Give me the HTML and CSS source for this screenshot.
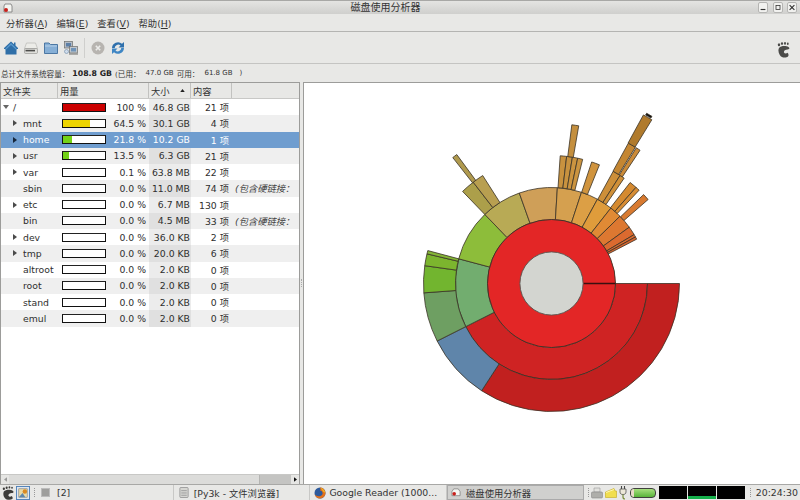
FILE: index.html
```html
<!DOCTYPE html>
<html lang="zh">
<head>
<meta charset="utf-8">
<title>磁盘使用分析器</title>
<link rel="stylesheet" href="styles.css">
</head>
<body>
<div class="screen">
  <header class="titlebar">
    <svg class="title-icon" viewBox="0 0 10 10"><path d="M1 3 L2 1 H8 L9 3 V9 H1Z" fill="#f4f4f0" stroke="#777" stroke-width=".8"/><circle cx="3" cy="7" r="2" fill="#c8201c"/></svg>
    <span class="title-text">磁盘使用分析器</span>
    <div class="wm-buttons">
      <span class="wm-btn"><svg viewBox="0 0 10 10"><path d="M2 7.5H8" stroke="#333" stroke-width="1.4"/></svg></span>
      <span class="wm-btn"><svg viewBox="0 0 10 10"><rect x="2.5" y="2.5" width="5" height="5" fill="none" stroke="#333"/></svg></span>
      <span class="wm-btn"><svg viewBox="0 0 10 10"><path d="M2 2L8 8M8 2L2 8" stroke="#333" stroke-width="1.4"/></svg></span>
    </div>
  </header>
  <nav class="menubar">
    <span class="menu-item">分析器(<u>A</u>)</span>
    <span class="menu-item">编辑(<u>E</u>)</span>
    <span class="menu-item">查看(<u>V</u>)</span>
    <span class="menu-item">帮助(<u>H</u>)</span>
  </nav>
  <div class="toolbar">
    <span class="tool"><svg viewBox="0 0 14 14"><path d="M7 0.5 L10 3.2V1.5H11.5V4.6L14 7V8H12.5V13.5H1.5V8H0V7Z" fill="#2f6fa8"/><path d="M7 2 L12.5 7.5V9L7 4 1.5 9V7.5Z" fill="#5a9bd0"/></svg></span>
    <span class="tool"><svg viewBox="0 0 14 14"><path d="M2.5 2H11.5L13.5 7.5H0.5Z" fill="#ecece8" stroke="#b0b0ac" stroke-width=".6"/><rect x="0.5" y="7.5" width="13" height="5" rx="1.2" fill="#dededa" stroke="#8c8c88" stroke-width=".6"/><rect x="1.5" y="8.8" width="9.5" height="1.6" fill="#4c4c4a"/></svg></span>
    <span class="tool"><svg viewBox="0 0 14 14"><path d="M0.5 12.5V2H5L6.5 3.5H13.5V12.5Z" fill="#86afd6" stroke="#3f6d9c" stroke-width=".9"/><path d="M1 5H13" stroke="#b6d0e8"/></svg></span>
    <span class="tool"><svg viewBox="0 0 14 14"><rect x="0.5" y="0.5" width="8" height="6.5" fill="#b4bcc6" stroke="#6e6e6c" stroke-width=".7"/><rect x="2" y="2" width="5" height="3.500" fill="#5d7fa6"/><rect x="5.5" y="5.500" width="8" height="6.5" fill="#c0c6cc" stroke="#6e6e6c" stroke-width=".7"/><rect x="7" y="7" width="5" height="3.500" fill="#6f93b8"/><path d="M5 13H14" stroke="#8a8a88" stroke-width="1.300"/><circle cx="2.500" cy="10.500" r="2" fill="#cfdceb" stroke="#6b88a8" stroke-width=".6"/></svg></span>
    <span class="tool-sep"></span>
    <span class="tool"><svg viewBox="0 0 14 14"><circle cx="7" cy="7" r="6.5" fill="#b7b4b0"/><path d="M4.8 4.8L9.2 9.2M9.2 4.8L4.8 9.2" stroke="#ececea" stroke-width="1.6"/></svg></span>
    <span class="tool"><svg viewBox="0 0 14 14"><path d="M1 7A6 6 0 0 1 11 2.8L13 1V6.5H7.5L9.5 4.5A3.5 3.5 0 0 0 3.7 7Z" fill="#2f70ac"/><path d="M13 7A6 6 0 0 1 3 11.200L1 13V7.5H6.5L4.5 9.5A3.5 3.5 0 0 0 10.300 7Z" fill="#3f86c4"/></svg></span>
    <svg class="foot-big" viewBox="0 0 14 16"><g fill="#4a4a48"><ellipse cx="2" cy="2.8" rx="1.2" ry="1.5"/><ellipse cx="5" cy="1.6" rx="1.1" ry="1.4"/><ellipse cx="8" cy="1.4" rx="1" ry="1.3"/><ellipse cx="10.8" cy="1.8" rx=".9" ry="1.2"/><path d="M2 6C4 3.500 9 3.500 11.500 5C13 6 12.500 7.500 10.500 7.500C8 7.500 6.500 9 7 10.500C7.500 11.800 9.500 11.800 10.500 10.800C11.500 12 12 13 11 14.500C9 16.300 4.500 16 2.800 13C1.300 10.500 1 8 2 6Z"/></g></svg>
  </div>
  <div class="infobar">
    <span class="info-label">总计文件系统容量：</span>
    <b class="info-total">108.8 GB</b>
    <span class="info-open">(<span class="info-cjk">已用：</span></span>
    <span class="info-num">47.0 GB</span>
    <span class="info-cjk info-free">可用：</span>
    <span class="info-num">61.8 GB</span>
    <span class="info-close">)</span>
  </div>
  <main class="panes">
    <section class="tree">
      <div class="tree-head">
        <span class="th">文件夹</span>
        <span class="th">用量</span>
        <span class="th th-sort">大小<svg class="sort-arrow" viewBox="0 0 6 4"><path d="M3 0L6 4H0Z" fill="#222"/></svg></span>
        <span class="th">内容</span>
        <span class="th th-last"></span>
      </div>
      <div class="tree-body">
        <div class="row"><span class="name root"><i class="exp exp-down"></i>/</span><span class="usage"><span class="bar"><span class="fill fill-red" style="width:100%"></span></span><span class="pct">100 %</span></span><span class="size">46.8 GB</span><span class="count">21 项</span><span class="note"></span></div>
        <div class="row alt"><span class="name"><i class="exp"></i>mnt</span><span class="usage"><span class="bar"><span class="fill fill-yellow" style="width:64.5%"></span></span><span class="pct">64.5 %</span></span><span class="size">30.1 GB</span><span class="count">4 项</span><span class="note"></span></div>
        <div class="row selected"><span class="name"><i class="exp"></i>home</span><span class="usage"><span class="bar"><span class="fill fill-green" style="width:21.8%"></span></span><span class="pct">21.8 %</span></span><span class="size">10.2 GB</span><span class="count">1 项</span><span class="note"></span></div>
        <div class="row alt"><span class="name"><i class="exp"></i>usr</span><span class="usage"><span class="bar"><span class="fill fill-green" style="width:13.5%"></span></span><span class="pct">13.5 %</span></span><span class="size">6.3 GB</span><span class="count">21 项</span><span class="note"></span></div>
        <div class="row"><span class="name"><i class="exp"></i>var</span><span class="usage"><span class="bar"></span><span class="pct">0.1 %</span></span><span class="size">63.8 MB</span><span class="count">22 项</span><span class="note"></span></div>
        <div class="row alt"><span class="name"><i class="exp exp-none"></i>sbin</span><span class="usage"><span class="bar"></span><span class="pct">0.0 %</span></span><span class="size">11.0 MB</span><span class="count">74 项</span><span class="note">(包含硬链接：</span></div>
        <div class="row"><span class="name"><i class="exp"></i>etc</span><span class="usage"><span class="bar"></span><span class="pct">0.0 %</span></span><span class="size">6.7 MB</span><span class="count">130 项</span><span class="note"></span></div>
        <div class="row alt"><span class="name"><i class="exp exp-none"></i>bin</span><span class="usage"><span class="bar"></span><span class="pct">0.0 %</span></span><span class="size">4.5 MB</span><span class="count">33 项</span><span class="note">(包含硬链接：</span></div>
        <div class="row"><span class="name"><i class="exp"></i>dev</span><span class="usage"><span class="bar"></span><span class="pct">0.0 %</span></span><span class="size">36.0 KB</span><span class="count">2 项</span><span class="note"></span></div>
        <div class="row alt"><span class="name"><i class="exp"></i>tmp</span><span class="usage"><span class="bar"></span><span class="pct">0.0 %</span></span><span class="size">20.0 KB</span><span class="count">6 项</span><span class="note"></span></div>
        <div class="row"><span class="name"><i class="exp exp-none"></i>altroot</span><span class="usage"><span class="bar"></span><span class="pct">0.0 %</span></span><span class="size">2.0 KB</span><span class="count">0 项</span><span class="note"></span></div>
        <div class="row alt"><span class="name"><i class="exp exp-none"></i>root</span><span class="usage"><span class="bar"></span><span class="pct">0.0 %</span></span><span class="size">2.0 KB</span><span class="count">0 项</span><span class="note"></span></div>
        <div class="row"><span class="name"><i class="exp exp-none"></i>stand</span><span class="usage"><span class="bar"></span><span class="pct">0.0 %</span></span><span class="size">2.0 KB</span><span class="count">0 项</span><span class="note"></span></div>
        <div class="row alt"><span class="name"><i class="exp exp-none"></i>emul</span><span class="usage"><span class="bar"></span><span class="pct">0.0 %</span></span><span class="size">2.0 KB</span><span class="count">0 项</span><span class="note"></span></div>
      </div>
      <div class="hscroll">
        <span class="sb-btn"><svg viewBox="0 0 4 6"><path d="M4 0V6L0 3Z" fill="#999"/></svg></span>
        <span class="sb-track"><span class="sb-thumb"></span></span>
        <span class="sb-btn"><svg viewBox="0 0 4 6"><path d="M0 0V6L4 3Z" fill="#111"/></svg></span>
      </div>
    </section>
    <div class="pane-handle"><span class="grip"></span></div>
    <section class="chart">
      <svg id="sunburst" class="sunburst" viewBox="-199.5 -199.5 400 400"></svg>
    </section>
  </main>
  <footer class="taskbar">
    <svg class="panel-foot" viewBox="0 0 14 15"><g fill="#3c3c3a"><ellipse cx="2" cy="3" rx="1.2" ry="1.4"/><ellipse cx="5" cy="1.8" rx="1.1" ry="1.3"/><ellipse cx="8" cy="1.5" rx="1" ry="1.2"/><ellipse cx="10.8" cy="1.9" rx=".9" ry="1.1"/><path d="M2 6C4 3.500 9 3.500 11.500 5C13 6 12.500 7.500 10.500 7.500C8 7.500 6.500 9 7 10.500C7.500 11.800 9.500 11.800 10.500 10.800C11.500 12 12 13 11 14C9 15.500 4.500 15 2.800 12.500C1.300 10.500 1 8 2 6Z"/></g></svg>
    <svg class="panel-pic" viewBox="0 0 15 15"><rect x=".5" y=".5" width="14" height="14" fill="#dfe6ee" stroke="#4d7fb8"/><rect x="3" y="3" width="9" height="9" fill="#e9d9a6" stroke="#777" stroke-width=".6"/><circle cx="9.5" cy="6" r="2.4" fill="#d98a22"/><path d="M3 12L7 7.500L10 12Z" fill="#5c86ad"/></svg>
    <span class="handle"></span>
    <div class="task task-workspace"><span class="task-square"></span><span class="task-label">[2]</span></div>
    <div class="task"><svg class="task-icon" viewBox="0 0 10 12"><rect x=".5" y=".5" width="9" height="11" rx="1" fill="#d6d6d2" stroke="#999"/><path d="M2 4H8M2 6.500H8M2 9H8" stroke="#999"/></svg><span class="task-label">[Py3k - 文件浏览器]</span></div>
    <div class="task"><svg class="task-icon task-fox" viewBox="0 0 12 12"><circle cx="6" cy="6" r="5.5" fill="#2d5a9c"/><path d="M6 .5A5.500 5.500 0 1 1 .6 7C2 9.500 6 10 8 8C9.500 6 8 3.500 6 3.500C7 2.500 6 1 6 .5Z" fill="#e2701a"/><path d="M6.500 .7C9 1.200 11 3.500 11.400 6L9 4.500Z" fill="#f0b020"/></svg><span class="task-label">Google Reader (1000...</span></div>
    <div class="task task-active"><svg class="task-icon" viewBox="0 0 11 10"><path d="M1 4L3 1H8L10 4V8.500H1Z" fill="#f4f4f0" stroke="#777" stroke-width=".8"/><circle cx="3.5" cy="6.5" r="2" fill="#c8201c"/></svg><span class="task-label">磁盘使用分析器</span></div>
    <span class="handle handle-tray"></span>
    <svg class="tray-icon" viewBox="0 0 12 12"><path d="M3 1H9V5H3Z" fill="#e2e2de" stroke="#999" stroke-width=".6"/><rect x=".5" y="5" width="11" height="6" rx="1" fill="#aeaeaa" stroke="#888" stroke-width=".6"/></svg>
    <svg class="tray-icon" viewBox="0 0 12 12"><path d="M.5 10.500V5L3 4 9 1.500 10 4H11.500V10.500Z" fill="#f1de4e" stroke="#c8b22e" stroke-width=".7"/><path d="M1 5.500L9 2.500" stroke="#fff7b0"/></svg>
    <svg class="tray-plug" viewBox="0 0 8 14"><path d="M2.500 0V3M5.500 0V3" stroke="#444" stroke-width="1.100"/><path d="M1 3H7V6C7 8 5.500 8.500 4 8.500C2.500 8.500 1 8 1 6Z" fill="#ece8d8" stroke="#555" stroke-width=".8"/><path d="M4 8.500V11C4 12.500 5 13 6 13" fill="none" stroke="#7a8f3a" stroke-width="1.200"/></svg>
    <span class="battery"><span class="battery-cap"></span></span>
    <div class="monitors">
      <span class="monitor"></span>
      <span class="monitor monitor-net"></span>
      <span class="monitor"></span>
    </div>
    <span class="handle handle-clock"></span>
    <span class="clock">20:24:30</span>
  </footer>
</div>
<script src="sunburst.js"></script>
</body>
</html>
```
FILE: styles.css
```css
* { box-sizing: border-box; }
html, body { margin: 0; padding: 0; background: #e8e8e6; }
body {
  width: 800px;
  height: 500px;
  overflow: hidden;
  font-family: "DejaVu Sans", "Noto Sans CJK SC", sans-serif;
  font-size: 9.3px;
  color: #2a2a2a;
}
.screen { width: 800px; height: 500px; display: flex; flex-direction: column; }

.titlebar {
  height: 14px;
  flex: none;
  display: flex;
  align-items: center;
  padding-left: 3px;
  border-top: 1px solid #a8a8a6;
  background: linear-gradient(#e4e4e2, #cfcfcd);
}
.title-icon { width: 10px; height: 10px; }
.title-text {
  flex: 1;
  text-align: center;
  font-size: 10px;
  color: #333;
  line-height: 12px;
}
.wm-buttons { display: flex; gap: 4.5px; padding-right: 3px; }
.wm-btn {
  width: 10px;
  height: 11px;
  display: flex;
  background: #f1f1ef;
  border: 1px solid #b5b5b3;
  border-radius: 2px;
}
.wm-btn svg { width: 8px; height: 9px; }

.menubar {
  height: 18px;
  flex: none;
  display: flex;
  align-items: center;
  gap: 9px;
  padding-left: 6px;
  background: #e8e8e6;
  border-bottom: 1px solid #b4b4b2;
}
.menu-item { white-space: nowrap; color: #333; }

.toolbar {
  height: 32px;
  flex: none;
  display: flex;
  align-items: center;
  padding-left: 1px;
  padding-right: 9px;
  background: #e8e8e6;
  border-bottom: 1px solid #c4c4c2;
}
.tool { width: 20px; height: 14px; display: flex; justify-content: center; }
.tool svg { width: 14px; height: 14px; }
.tool-sep { width: 1px; height: 20px; background: #cfcfcd; margin: 0 3px 0 3px; }
.foot-big { width: 14px; height: 16px; margin-left: auto; margin-top: 5px; }

.infobar {
  height: 18px;
  flex: none;
  display: flex;
  align-items: center;
  white-space: nowrap;
  font-size: 7px;
  padding-left: 1px;
  background: #e8e8e6;
  color: #333;
}
.info-label, .info-cjk { font-size: 7.6px; }
.info-total { font-weight: 700; margin: 0 3px 0 3px; font-size: 7.8px; color: #222; }
.info-num { margin-left: 5px; }
.info-free { margin-left: 3px; }
.info-close { margin-left: 7px; }

.panes { flex: 1; min-height: 0; display: flex; }
.tree {
  width: 300px;
  flex: none;
  display: flex;
  flex-direction: column;
  background: #fff;
  border: 1px solid #9c9c9a;
  border-bottom: 0;
}
.tree-head,
.row {
  display: grid;
  grid-template-columns: 57px 91px 42px 41px 1fr;
  align-items: center;
}
.tree-head { height: 16px; flex: none; background: #e8e8e6; border-bottom: 1px solid #c8c8c6; }
.th {
  height: 100%;
  display: flex;
  align-items: center;
  padding-left: 2px;
  border-right: 1px solid #c2c2c0;
  color: #333;
}
.th-sort { justify-content: space-between; padding-right: 5px; }
.th-last { border-right: 0; }
.sort-arrow { width: 5px; height: 3px; }

.tree-body { flex: 1; min-height: 0; background: #fff; }
.row { height: 16.25px; white-space: nowrap; color: #2e2e2e; }
.row.alt { background: #efefef; }
.row.selected { background: #6f9dcf; color: #fff; }
.name { display: flex; align-items: center; padding-left: 11px; overflow: hidden; }
.name.root { padding-left: 1px; }
.exp {
  width: 0;
  height: 0;
  margin-right: 6px;
  margin-left: 1px;
  border-left: 4px solid #4a4a4a;
  border-top: 3px solid transparent;
  border-bottom: 3px solid transparent;
}
.row.selected .exp { border-left-color: #16263a; }
.exp-none { border-color: transparent; }
.exp-down {
  margin-left: 1px;
  margin-right: 4px;
  border-left: 3px solid transparent;
  border-right: 3px solid transparent;
  border-top: 4px solid #666;
  border-bottom: 0;
}
.usage { display: flex; align-items: center; padding-left: 4px; }
.bar {
  width: 44px;
  height: 9px;
  flex: none;
  display: flex;
  background: #fff;
  border: 1px solid #111;
  border-top-color: #222;
}
.fill { display: block; height: 100%; }
.fill-red { background: #cc0000; }
.fill-yellow { background: #edd400; }
.fill-green { background: #73d216; }
.pct { flex: 1; text-align: right; padding-right: 3px; }
.size { height: 100%; display: flex; align-items: center; justify-content: flex-end; padding-right: 1px; background: #ececec; }
.row.alt .size { background: #e0e0e0; }
.row.selected .size { background: #6f9dcf; }
.count { text-align: right; padding-right: 3px; }
.note {
  padding-left: 3px;
  font-style: italic;
  color: #444;
  overflow: hidden;
}

.hscroll {
  height: 10px;
  flex: none;
  display: flex;
  background: #dcdcda;
  border-top: 1px solid #c8c8c6;
}
.sb-btn { width: 8px; flex: none; display: flex; align-items: center; justify-content: center; background: #e6e6e4; }
.sb-btn svg { width: 3px; height: 5px; }
.sb-track { flex: 1; display: flex; justify-content: flex-end; }
.sb-thumb { width: 32px; background: #c4c4c2; border-left: 1px solid #b4b4b2; }

.pane-handle { width: 3px; flex: none; display: flex; align-items: center; justify-content: center; background: #e8e8e6; }
.grip { width: 1px; height: 8px; border-left: 1px dotted #aaa; }

.chart {
  flex: 1;
  min-width: 0;
  overflow: hidden;
  display: flex;
  align-items: center;
  justify-content: center;
  background: #fff;
  border: 1px solid #9c9c9a;
  border-right: 0;
  border-bottom: 0;
}
.sunburst { width: 400px; height: 400px; flex: none; }

.taskbar {
  height: 16px;
  flex: none;
  display: flex;
  align-items: center;
  background: #e8e8e6;
  border-top: 1px solid #a8a8a6;
  padding-left: 2px;
  color: #333;
}
.panel-foot { width: 13px; height: 14px; flex: none; }
.panel-pic { width: 14px; height: 14px; flex: none; margin-left: 1px; }
.handle { width: 1px; height: 9px; flex: none; margin: 0 2px 0 4px; border-left: 1px dotted #999; }
.task {
  width: 136.7px;
  height: 100%;
  flex: none;
  display: flex;
  align-items: center;
  padding-left: 5px;
  border-right: 1px solid #c8c8c6;
  white-space: nowrap;
  overflow: hidden;
}
.task-workspace { padding-left: 4px; }
.task-square { width: 9px; height: 9px; margin-right: 7px; background: #9e9e9c; border: 1px solid #bbb; }
.task-icon { width: 10px; height: 11px; margin-right: 5px; flex: none; }
.task-fox { width: 12px; height: 12px; margin-left: -1px; margin-right: 3px; }
.task-active { background: #d0d0ce; border: 1px solid #aaa; padding-left: 3px; }
.task-active .task-icon { margin-right: 5px; margin-left: 0; }
.handle-tray { margin-left: 4px; margin-right: 2px; }
.tray-icon { width: 12px; height: 12px; flex: none; margin-right: 2px; }
.tray-plug { width: 8px; height: 14px; flex: none; margin: 0 3px 0 0; }
.battery {
  width: 26px;
  height: 10px;
  flex: none;
  display: block;
  background: linear-gradient(#a6e07e, #58b43a);
  border: 1px solid #3f3f3d;
  border-radius: 4px;
  overflow: hidden;
}
.battery-cap { display: block; width: 3px; height: 100%; background: #e9d8c8; }
.monitors { display: flex; gap: 1px; margin-left: 3px; }
.monitor { width: 28px; height: 13px; display: block; background: #000; }
.monitor-net { border-bottom: 3px solid #14b04a; }
.handle-clock { margin-left: 5px; margin-right: 5px; }
.clock { white-space: nowrap; font-size: 9.4px; }
```
FILE: sunburst.js
```js
// Sunburst chart: [inner radius, outer radius, start angle, end angle, colour]
// Angles are degrees clockwise from east, as the disk usage analyzer draws them.
var wedges = [
  [64, 96, 0, 153.3, "#cf2323"],
  [64, 96, 153.3, 194.9, "#72ad6f"],
  [64, 96, 194.9, 226, "#8dbd3a"],
  [64, 96, 226, 250.4, "#b8aa55"],
  [64, 96, 250.4, 273.5, "#cf9f58"],
  [64, 96, 273.5, 288.2, "#d5a04f"],
  [64, 96, 288.2, 298.6, "#dc9f45"],
  [64, 96, 298.6, 308.2, "#df9c3b"],
  [64, 96, 308.2, 315.5, "#e08a35"],
  [64, 96, 315.5, 324.1, "#dd7831"],
  [64, 96, 324.1, 329.4, "#db6a2f"],
  [64, 96, 329.4, 331, "#da6a30"],
  [64, 96, 331, 332.5, "#d8652e"],

  [96, 128, 0, 123.1, "#c1201f"],
  [96, 128, 123.1, 153.3, "#5f85aa"],
  [96, 128, 153.3, 175.8, "#6e9f62"],
  [96, 128, 175.8, 188, "#72b52f"],
  [96, 128, 188, 193.4, "#7cb52e"],
  [96, 128, 193.4, 194.9, "#84b536"],
  [96, 128, 226, 232.3, "#ac9f4a"],
  [96, 128, 232.3, 237.5, "#b89f50"],
  [96, 128, 273.9, 276.8, "#c8923f"],
  [96, 128, 276.8, 279.4, "#c8923f"],
  [96, 128, 279.4, 281.8, "#cb9440"],
  [96, 128, 281.8, 284.1, "#cb9440"],
  [96, 128, 288.3, 292, "#d0943e"],
  [96, 128, 298.8, 302.4, "#cd8f39"],
  [96, 128, 302.4, 304.6, "#d09038"],
  [96, 128, 307.9, 311.3, "#d58a30"],
  [96, 128, 311.3, 313.2, "#d78d35"],
  [96, 128, 316, 319, "#d87a30"],

  [128, 160, 231.9, 233.7, "#b09a4e"],
  [128, 160, 277.3, 279.8, "#c48f3e"],
  [128, 160, 298.7, 301.6, "#c48632"],
  [128, 160, 302, 303.6, "#cc8b38"],
  [160, 192, 298.6, 301.5, "#b07a2c"],
  [193, 195, 299.2, 301, "#111111"]
];

var NS = "http://www.w3.org/2000/svg";
var svg = document.getElementById("sunburst");

function point(r, deg) {
  var a = deg * Math.PI / 180;
  return (r * Math.cos(a)).toFixed(2) + " " + (r * Math.sin(a)).toFixed(2);
}

function add(tag, attrs) {
  var el = document.createElementNS(NS, tag);
  for (var k in attrs) el.setAttribute(k, attrs[k]);
  svg.appendChild(el);
}

var EDGE = "#3a3226";

wedges.forEach(function (w) {
  var large = w[3] - w[2] > 180 ? 1 : 0;
  add("path", {
    d: "M" + point(w[0], w[2]) +
       "A" + w[0] + " " + w[0] + " 0 " + large + " 1 " + point(w[0], w[3]) +
       "L" + point(w[1], w[3]) +
       "A" + w[1] + " " + w[1] + " 0 " + large + " 0 " + point(w[1], w[2]) + "Z",
    fill: w[4],
    stroke: EDGE,
    "stroke-width": 0.8
  });
});

add("circle", { r: 64, fill: "#e32626", stroke: EDGE, "stroke-width": 0.9 });
add("path", { d: "M32 0H64", stroke: "#3a1010", "stroke-width": 1.4 });
add("circle", { r: 31.6, fill: "#d3d5d0", stroke: "#55554f", "stroke-width": 0.9 });
```
